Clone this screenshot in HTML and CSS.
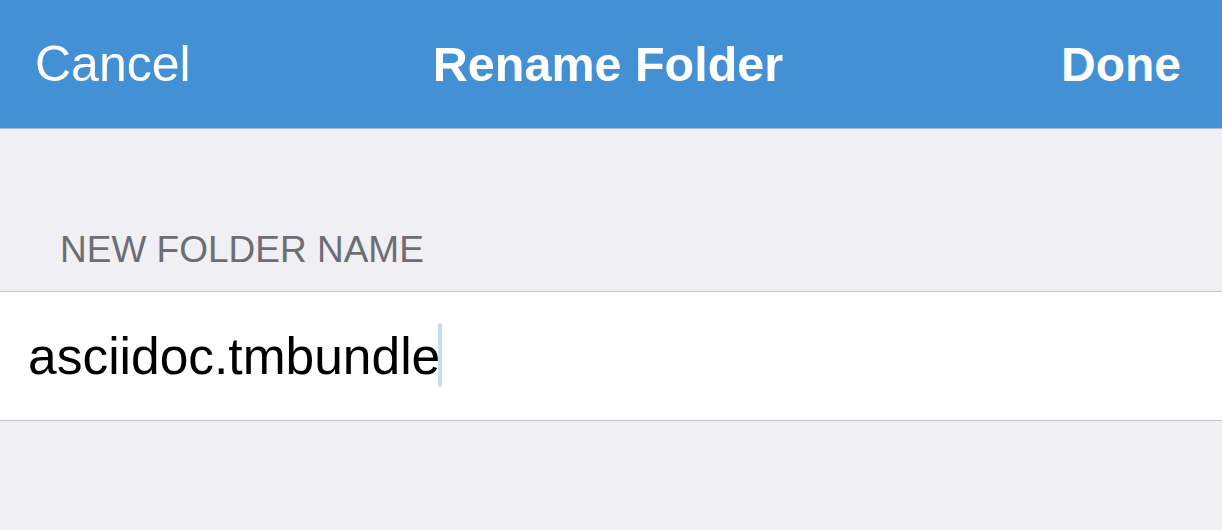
FILE: index.html
```html
<!DOCTYPE html>
<html>
<head>
<meta charset="utf-8">
<link rel="stylesheet" href="styles.css">
</head>
<body>
<header class="navbar">
  <span class="nav-btn nav-left">Cancel</span>
  <span class="nav-title">Rename Folder</span>
  <span class="nav-btn nav-right">Done</span>
</header>
<main class="content">
  <div class="section-header">NEW FOLDER NAME</div>
  <div class="field-row">
    <span class="field-text">asciidoc.tmbundle</span><span class="cursor"></span>
  </div>
</main>
</body>
</html>
```

FILE: styles.css
```css
html, body {
  margin: 0;
  padding: 0;
  background: #efeff4;
  font-family: "Liberation Sans", Arial, sans-serif;
  height: 100%;
}

.navbar {
  height: 128px;
  background: #4390d4;
  border-bottom: 1px solid #a9bccd;
  display: grid;
  grid-template-columns: 1fr auto 1fr;
  align-items: center;
  color: #ffffff;
  padding: 0 41px 0 35px;
}

.nav-btn {
  font-size: 50px;
}

.nav-left {
  justify-self: start;
}

.nav-right {
  justify-self: end;
  font-weight: bold;
  font-size: 48px;
}

.nav-title {
  font-weight: bold;
  font-size: 48.5px;
}

.content {
  display: flex;
  flex-direction: column;
}

.section-header {
  margin-top: 99px;
  padding: 0 0 19px 60px;
  font-size: 37px;
  line-height: 44px;
  color: #6d6d72;
}

.field-row {
  background: #ffffff;
  border-top: 1px solid #c8c7cc;
  border-bottom: 1px solid #c8c7cc;
  height: 128px;
  display: flex;
  align-items: center;
  padding-left: 28px;
}

.field-text {
  font-size: 51.5px;
  line-height: 128px;
  color: #000000;
}

.cursor {
  display: inline-block;
  width: 4px;
  height: 64px;
  border-radius: 2px;
  background: #c9ddf2;
  margin: 0 0 2px -2px;
}
```
